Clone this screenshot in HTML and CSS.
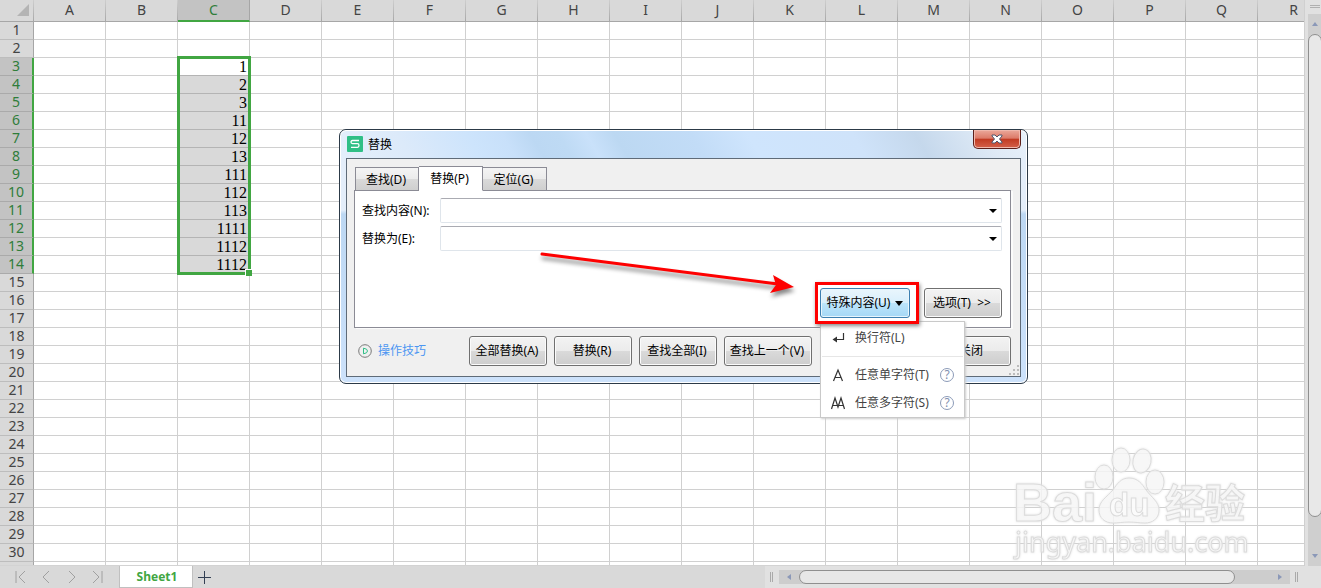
FILE: index.html
```html
<!DOCTYPE html>
<html lang="zh-CN">
<head>
<meta charset="utf-8">
<title>Sheet1</title>
<link rel="stylesheet" href="styles.css">
</head>
<body>
<main class="workspace">
  <div class="sheet-view">
    <table class="grid" id="grid"></table>

    <svg class="watermark" viewBox="0 0 250 125" aria-label="Baidu 经验 jingyan.baidu.com">
      <g class="mark">
        <ellipse cx="99" cy="38" rx="9" ry="12"/>
        <ellipse cx="116" cy="21" rx="9" ry="12"/>
        <ellipse cx="137" cy="22" rx="9" ry="12" transform="rotate(12 137 22)"/>
        <ellipse cx="150" cy="43" rx="9" ry="12"/>
        <path d="M124 39c9 0 13 6 17 12 6 8 13 12 13 20 0 9-7 13-14 13-6 0-10-1-16-1s-11 1-16 1c-8 0-14-5-14-13 0-9 8-13 14-20 4-6 8-12 16-12z"/>
        <text class="latin" x="8" y="82" font-size="54">Bai</text>
        <text class="latin" x="104" y="77" font-size="33">du</text>
        <text class="cjk" x="160" y="79" font-size="40">经验</text>
        <text class="url" x="10" y="113" font-size="27">jingyan.baidu.com</text>
      </g>
    </svg>
  </div>
  <div class="vbar">
    <div class="split-mark"></div>
    <div class="vtrack">
      <svg class="arrow" viewBox="0 0 6 4"><path d="M0 4h6L3 0z"/></svg>
      <div class="vthumb"></div>
      <svg class="arrow" viewBox="0 0 6 4"><path d="M0 0h6L3 4z"/></svg>
    </div>
  </div>
</main>

<footer class="tabbar">
  <nav class="sheet-nav">
    <button aria-label="第一个"><svg viewBox="0 0 12 14"><path d="M2 1v12M11 1L5 7l6 6"/></svg></button>
    <button aria-label="上一个"><svg viewBox="0 0 12 14"><path d="M9 1L3 7l6 6"/></svg></button>
    <button aria-label="下一个"><svg viewBox="0 0 12 14"><path d="M3 1l6 6-6 6"/></svg></button>
    <button aria-label="最后一个"><svg viewBox="0 0 12 14"><path d="M10 1v12M1 1l6 6-6 6"/></svg></button>
  </nav>
  <button class="sheet-tab">Sheet1</button>
  <button class="add-sheet" aria-label="新建工作表"><svg viewBox="0 0 13 13"><path d="M6.500 0v13M0 6.500h13"/></svg></button>
  <div class="hbar">
    <div class="grip"></div>
    <div class="htrack">
      <svg class="side" viewBox="0 0 4 6"><path d="M4 0v6L0 3z"/></svg>
      <div class="hthumb"></div>
      <svg class="side" viewBox="0 0 4 6"><path d="M0 0v6l4-3z"/></svg>
    </div>
    <div class="grip"></div>
  </div>
</footer>

<section class="dialog" role="dialog" aria-labelledby="dialog-title">
  <header class="titlebar">
    <svg class="app-icon" viewBox="0 0 16 16"><rect width="16" height="16" rx="1" fill="#2fbf86"/><path d="M12 4.500H5.500Q4 4.500 4 6t1.500 1.700h5Q12 7.700 12 9.500t-1.500 1.800H4" fill="none" stroke="#fff" stroke-width="1.300"/></svg>
    <h1 id="dialog-title">替换</h1>
    <button class="close" aria-label="关闭窗口"><svg viewBox="0 0 12 10"><path d="M1 1h3l2 2 2-2h3v1L8.500 5 11 8v1H8L6 7 4 9H1V8l2.500-3L1 2z"/></svg></button>
  </header>
  <div class="client">
    <div class="tabs" role="tablist">
      <button role="tab">查找(D)</button>
      <button role="tab" class="active" aria-selected="true">替换(P)</button>
      <button role="tab">定位(G)</button>
    </div>
    <div class="panel">
      <div class="field">
        <label for="find">查找内容(N):</label>
        <div class="combo"><input id="find" type="text"><button aria-label="展开"><svg viewBox="0 0 8 4"><path d="M0 0h8L4 4z"/></svg></button></div>
      </div>
      <div class="field">
        <label for="replace">替换为(E):</label>
        <div class="combo"><input id="replace" type="text"><button aria-label="展开"><svg viewBox="0 0 8 4"><path d="M0 0h8L4 4z"/></svg></button></div>
      </div>
      <div class="extras">
        <div class="special">
          <button class="btn hot">特殊内容(U)<svg viewBox="0 0 8 5"><path d="M0 0h8L4 5z"/></svg></button>
          <div class="menu" role="menu">
            <button class="item" role="menuitem"><svg class="glyph" viewBox="0 0 14 14"><path d="M12.500 2v6.500H4" class="line"/><path d="M1.500 8.500L6 5.500v6z"/></svg><span>换行符(L)</span></button>
            <hr>
            <button class="item" role="menuitem"><svg class="glyph" viewBox="0 0 14 14"><path d="M2.500 13L7 2l4.500 11M4 9.500h6" class="line"/></svg><span>任意单字符(T)</span><i class="help">?</i></button>
            <button class="item" role="menuitem"><svg class="glyph" viewBox="0 0 14 14"><path d="M.5 13L4 2l3 9L10 2l3.500 11M2 9.500h4M8 9.500h4" class="line"/></svg><span>任意多字符(S)</span><i class="help">?</i></button>
          </div>
          <div class="callout"></div>
        </div>
        <button class="btn">选项(T) &nbsp;&gt;&gt;</button>
      </div>
    </div>
    <div class="actions">
      <a class="tips" href="#tips"><svg viewBox="0 0 14 14"><circle cx="7" cy="7" r="6.300"/><path d="M5.500 4.200v5.600q4-.6 4-2.800t-4-2.800z"/></svg>操作技巧</a>
      <button class="btn">全部替换(A)</button>
      <button class="btn">替换(R)</button>
      <button class="btn">查找全部(I)</button>
      <button class="btn wide">查找上一个(V)</button>
      <button class="btn last">关闭</button>
    </div>
    <svg class="resize" viewBox="0 0 10 10"><path d="M8 0h2v2H8zM4 4h2v2H4zM8 4h2v2H8zM0 8h2v2H0zM4 8h2v2H4zM8 8h2v2H8z"/></svg>
  </div>
  <svg class="pointer" viewBox="0 0 260 50"><path d="M2 5L238 35" class="shaft"/><path d="M233 26l21 12-24 6 6-8z"/></svg>
</section>
<script src="grid.js"></script>
</body>
</html>
```
FILE: styles.css
```css
* { box-sizing: border-box; }
body {
  margin: 0;
  height: 100vh;
  display: flex;
  flex-direction: column;
  overflow: hidden;
  background: #e1e1e1;
  color: #000;
  font: 12px/16px "Noto Sans", "Noto Sans CJK SC", sans-serif;
}
button { font: inherit; color: inherit; padding: 0; border: 0; background: none; }

.workspace { flex: 1; min-height: 0; display: flex; }
.sheet-view { flex: 1; min-width: 0; position: relative; overflow: hidden; background: #fff; border-bottom: 1px solid #d3d3d3; }

.grid { table-layout: fixed; width: 1330px; border-collapse: separate; border-spacing: 0; }
.grid col { width: 72px; }
.grid col.numbers { width: 34px; }
.grid th, .grid td { height: 18px; padding: 0; border-right: 1px solid #d0d0d0; border-bottom: 1px solid #d0d0d0; }
.grid th { background: #d9d9d9; color: #444; font-size: 14px; line-height: 14px; font-weight: 400; text-align: center; }
.grid tbody th { padding-bottom: 2px; }
.grid thead th { height: 22px; line-height: 18px; padding-bottom: 2px; border-bottom-color: #a6a6a6; border-right: 1px solid; border-image: linear-gradient(#d0d0d0, #a6a6a6) 1; }
.grid tbody th { border-right-color: #a6a6a6; border-bottom-color: #bdbdbd; }
.grid thead th.picked { padding-bottom: 1px; background: #c3c3c3; color: #2f7d3a; border-image: none; border-right-color: #a6a6a6; border-bottom: 2px solid #41a642; }
.grid tbody th.picked { background: #c3c3c3; color: #2f7d3a; border-right: 2px solid #41a642; border-bottom-color: #aaa; }
.grid td { padding: 1px 2px 0 0; text-align: right; font: 16px/16px "Liberation Serif", serif; }
.grid td.filled { background: #d9d9d9; border-bottom-color: #b4b4b4; }
.grid td.first { position: relative; border-bottom-color: #b4b4b4; }
.corner svg { display: block; width: 12px; height: 12px; margin-left: 17px; fill: #b4b4b4; }
.selection { position: absolute; top: -2px; left: -1px; width: 74px; height: 219px; border: 3px solid #41a642; }
.selection::after { content: ""; position: absolute; right: -4px; bottom: -4px; width: 6px; height: 6px; background: #41a642; border-top: 1px solid #fff; border-left: 1px solid #fff; }

.watermark { position: absolute; right: 49px; bottom: 1px; width: 250px; height: 125px; filter: drop-shadow(0 0 1px #ddd); }
.mark { fill: #fff; fill-opacity: .6; stroke: #dcdcdc; stroke-width: 1; }
.latin { font-family: "Liberation Sans", sans-serif; font-weight: 700; }
.cjk { font-family: "Noto Sans CJK SC", sans-serif; font-weight: 700; }
.url { font-family: "Noto Sans", sans-serif; }

.vbar { width: 17px; padding-left: 3px; border-left: 1px solid #d0d0d0; display: flex; flex-direction: column; gap: 6px; }
.split-mark { width: 10px; height: 3px; margin: 5px 0 0 2px; border: solid #b0b0b0; border-width: 1px 0; }
.vtrack { flex: 1; display: flex; flex-direction: column; align-items: center; background: #cfcfcf; }
.arrow { width: 6px; height: 4px; margin: 8px 0; fill: #8b98b8; }
.vthumb { flex: 1; width: 14px; margin-bottom: 29px; border: 1px solid #8f8f8f; border-radius: 7px; background: #e8e8e8; }

.tabbar { height: 22px; display: flex; background: #d9d9d9; }
.sheet-nav { width: 119px; padding-left: 14px; display: flex; gap: 14px; align-items: center; }
.sheet-nav svg { display: block; width: 12px; height: 14px; fill: none; stroke: #a0a0a0; }
.sheet-tab { width: 74px; height: 22px; padding: 1px 0 0 2px; background: #fff; color: #41a642; font-weight: 700; border: solid #c0c0c0; border-width: 0 1px 1px; }
.add-sheet { width: 23px; display: flex; justify-content: center; align-items: center; }
.add-sheet svg { width: 13px; height: 13px; stroke: #344054; }
.hbar { width: 556px; margin-left: auto; padding: 4px 0 4px 5px; display: flex; align-items: center; background: #e1e1e1; }
.grip { width: 3px; height: 10px; border: solid #aaa; border-width: 0 1px; }
.htrack { flex: 1; height: 14px; margin: 0 5px 0 6px; display: flex; align-items: center; background: #cdcdcd; }
.hbar .grip:last-child { margin-right: 23px; }
.side { width: 4px; height: 6px; margin: 0 8px; fill: #8b98b8; }
.hthumb { flex: 1; height: 14px; margin-right: 35px; border: 1px solid #8f8f8f; border-radius: 7px; background: #e7e7e7; }

/* Replace dialog floating above the sheet */
.dialog {
  position: absolute; left: 339px; top: 129px; width: 689px;
  padding: 0 6px 6px;
  border: 1px solid #2c3a48; border-radius: 7px;
  background: linear-gradient(#e4eefa 0, #e4eefa 80px, #bdd8f3 84px, #cde2fb 100%);
  box-shadow: inset 0 0 0 1px #fff;
}
.titlebar {
  height: 28px; margin: 0 -5px; padding: 0 5px 0 6px; display: flex; gap: 5px; border-radius: 6px 6px 0 0;
  border-top: 1px solid #fff;
  background: linear-gradient(60deg, #e4effb 0, #dceafa 10%, #cde4fc 20%, #c8e0fa 25%, #bcd8f3 29%, #bedaf4 33%, #c9e1fa 37%, #bcd8f2 41%, #c2dcf7 52%, #cfe5fd 60%, #cfe3fa 75%, #c5d8ec 84%, #dfeaf6 94%, #e8f1fb 100%);
}
.app-icon { width: 16px; height: 16px; margin-top: 5px; }
h1 { margin: 6px 0 0; font-size: 12px; line-height: 16px; font-weight: 400; }
.close {
  width: 48px; height: 19px; margin: -1px 0 0 auto; display: flex; align-items: center; justify-content: center;
  border: 1px solid #5c1f1a; border-top: 0; border-radius: 0 0 5px 5px;
  background: linear-gradient(#eba99b, #dc7a68 46%, #c13a22 50%, #d4614a);
  box-shadow: inset 0 0 0 1px #f0b8ac;
}
.close svg { width: 12px; height: 10px; fill: #fff; stroke: #50566c; }
.client { position: relative; height: 219px; padding: 7px 9px 0 7px; border: 1px solid #5f6b78; background: #f0f0f0; }
.tabs { height: 25px; display: flex; align-items: flex-end; }
.tabs button { width: 64px; height: 24px; padding: 1px 2px 0 0; border: 1px solid #8b8b95; border-left-width: 0; background: linear-gradient(#f4f4f4 0, #ebebeb 50%, #dadada 50%, #cfcfcf); }
.tabs button:first-child { border-left-width: 1px; margin-left: 1px; }
.tabs button.active { position: relative; height: 25px; padding-bottom: 1px; background: #fff; border-bottom-color: #fff; }
.panel { height: 138px; margin-top: -1px; padding: 7px 8px 0 7px; border: 1px solid #8b8b95; background: #fff; box-shadow: 2px 1px #fbfbfb; display: flex; flex-direction: column; gap: 3px; }
.field { display: flex; align-items: center; }
.field label { width: 78px; }
.combo { flex: 1; height: 25px; display: flex; border: 1px solid #dfe5eb; border-top-color: #aaabb2; border-radius: 2px; }
.combo input { flex: 1; min-width: 0; padding: 0 4px; border: 0; outline: 0; font: inherit; background: none; }
.combo button { width: 16px; display: flex; align-items: center; justify-content: center; }
.combo svg { width: 8px; height: 4px; }
.extras { margin-top: 34px; display: flex; justify-content: flex-end; gap: 14px; }
.btn {
  width: 78px; height: 30px; white-space: nowrap; padding-right: 2px;
  border: 1px solid #707070; border-radius: 3px;
  background: linear-gradient(#f3f3f3 0, #ebebeb 50%, #dadada 50%, #cdcdcd);
  box-shadow: inset 0 0 0 1px #fbfbfb;
}
.special { position: relative; }
.hot { width: 90px; padding: 0; display: flex; align-items: center; justify-content: center; gap: 5px; border-color: #3c7fb1; background: linear-gradient(#e9f5fc 0, #d8effc 50%, #bde5fb 50%, #a5d8f6); box-shadow: inset 0 0 0 1px #e8f6fd; }
.hot svg { width: 8px; height: 5px; }
.menu { position: absolute; z-index: 2; left: 0; top: 33px; width: 145px; padding: 2px 1px 0; background: #fff; border: 1px solid #c9c9c9; box-shadow: 1px 1px 2px #ccc; color: #444; }
.menu hr { margin: 4px 0; border: 0; border-top: 1px solid #e6e6e6; }
.item { width: 100%; height: 28px; padding-left: 9px; display: flex; align-items: center; }
.glyph { width: 14px; height: 14px; margin-right: 10px; fill: #333; }
.glyph .line { fill: none; stroke: #333; stroke-width: 1.200; }
.help { width: 14px; height: 14px; margin: 0 2px 0 auto; border: 1px solid #8c9bb8; border-radius: 50%; color: #8291b0; font-style: normal; line-height: 12px; text-align: center; }
.item .help { margin-right: 9px; }
.callout { position: absolute; z-index: 3; left: -5px; top: -6px; width: 104px; height: 42px; border: 3px solid #fe0000; box-shadow: 1px 2px 4px #888; pointer-events: none; }
.actions { margin-top: 8px; display: flex; gap: 7px; }
.tips { width: 108px; padding-left: 4px; display: flex; align-items: center; gap: 6px; color: #4c96f2; text-decoration: none; }
.tips svg { width: 14px; height: 14px; fill: none; stroke: #7a7a7a; }
.tips path { stroke: #2fbf86; }
.wide { width: 88px; }
.last { margin-left: auto; }
.resize { position: absolute; right: 1px; bottom: 1px; width: 10px; height: 10px; fill: #bcbcbc; }
.pointer { position: absolute; left: 200px; top: 119px; width: 260px; height: 50px; fill: #fe0000; filter: drop-shadow(1px 4px 2px #888); pointer-events: none; }
.shaft { stroke: #fe0000; stroke-width: 3; stroke-linecap: round; }
```
FILE: grid.js
```js
const columns = "ABCDEFGHIJKLMNOPQR".split("");
const values = [1, 2, 3, 11, 12, 13, 111, 112, 113, 1111, 1112, 1112];
const firstRow = 3;
const rowCount = 31;

let html = '<colgroup><col class="numbers">' + columns.map(() => "<col>").join("") + "</colgroup>";
html += '<thead><tr><th class="corner"><svg viewBox="0 0 12 12"><path d="M12 0v12H0z"/></svg></th>';
html += columns.map(c => `<th class="${c === "C" ? "picked" : ""}">${c}</th>`).join("") + "</tr></thead><tbody>";

for (let row = 1; row <= rowCount; row++) {
  const value = values[row - firstRow];
  const picked = value !== undefined;
  html += `<tr><th class="${picked ? "picked" : ""}">${row}</th>`;
  for (const c of columns) {
    if (c !== "C" || !picked) html += "<td></td>";
    else if (row === firstRow) html += `<td class="first">${value}<div class="selection"></div></td>`;
    else html += `<td class="filled">${value}</td>`;
  }
  html += "</tr>";
}
document.getElementById("grid").innerHTML = html + "</tbody>";
```
